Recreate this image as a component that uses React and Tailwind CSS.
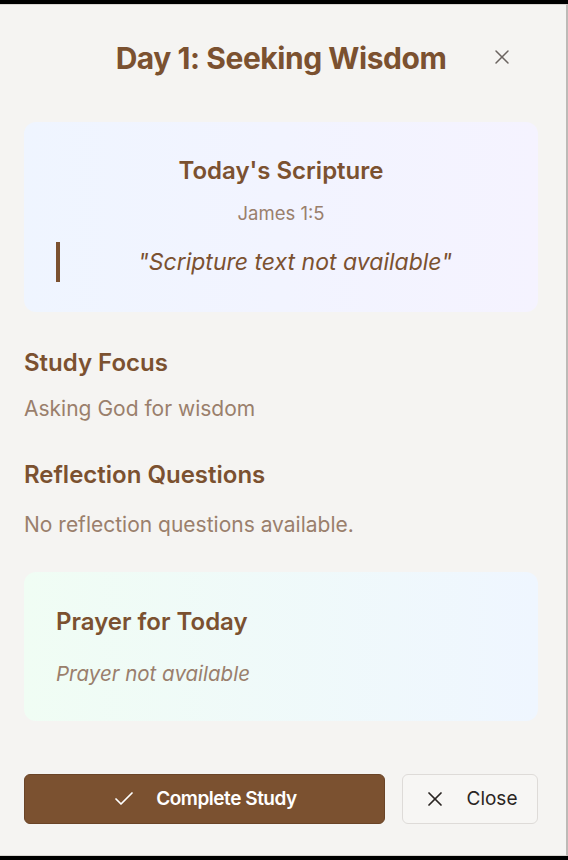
import React from 'react';
import { Check, X } from 'lucide-react';

const brown = 'text-[#7b5130]';
const muted = 'text-[#9a7f6c]';

function Section({ title, children, className = '' }) {
  return (
    <div className={className}>
      <h3 className={`text-2xl font-semibold leading-8 ${brown}`}>{title}</h3>
      {children}
    </div>
  );
}

export default function App() {
  return (
    <div className="h-[860px] bg-black pt-1 pb-1" style={{ fontFamily: 'Inter, "Noto Sans", sans-serif' }}>
      <div className="h-full bg-[#f5f4f2] border-t border-b border-[#d9d6d2] border-r-2 border-r-[#bdbab7] flex flex-col">
        {/* header */}
        <div className="relative pl-6 pr-7 pt-[35px]">
          <h2 className={`text-3xl font-bold leading-9 text-center tracking-[-0.015em] ${brown}`}>
            Day 1: Seeking Wisdom
          </h2>
          <button className="absolute right-[52px] top-[40px] text-[#6b6460]">
            <X size={24} strokeWidth={1.5} />
          </button>
        </div>

        <div className="pl-6 pr-7 pt-[46px]">
          {/* scripture card */}
          <div className="rounded-xl bg-gradient-to-r from-[#eff5ff] to-[#f5f3ff] px-8 pt-[33px] pb-[30px] text-center">
            <h3 className={`text-2xl font-semibold leading-8 ${brown}`}>Today's Scripture</h3>
            <p className={`mt-3 text-[18.5px] leading-7 ${muted}`}>James 1:5</p>
            <blockquote className={`mt-[15px] border-l-4 border-[#7b5130] pl-6 py-1 text-[23px] leading-8 italic ${brown}`}>
              "Scripture text not available"
            </blockquote>
          </div>

          <Section title="Study Focus" className="mt-[35px]">
            <p className={`mt-4 text-[21px] leading-7 ${muted}`}>Asking God for wisdom</p>
          </Section>

          <Section title="Reflection Questions" className="mt-9">
            <p className={`mt-5 text-[21px] leading-7 ${muted}`}>No reflection questions available.</p>
          </Section>

          {/* prayer card */}
          <div className="mt-[33px] rounded-xl bg-gradient-to-r from-[#f0fdf4] to-[#eff6ff] px-8 pt-[34px] pb-[33px]">
            <h3 className={`text-2xl font-semibold leading-8 ${brown}`}>Prayer for Today</h3>
            <p className={`mt-[22px] text-[20.5px] leading-7 italic ${muted}`}>Prayer not available</p>
          </div>

          {/* actions */}
          <div className="mt-[53px] flex gap-[17px]">
            <button className="flex-1 h-[50px] rounded-md bg-[#7b5130] border border-[#6a4427] text-white flex items-center justify-center gap-5 text-[19px] font-semibold tracking-tight">
              <Check size={24} strokeWidth={1.75} />
              <span>Complete Study</span>
            </button>
            <button className="w-[136px] h-[50px] rounded-md bg-[#f7f6f4] border border-[#dedbd8] text-[#2a2522] flex items-center justify-center gap-5 text-[19px] font-normal">
              <X size={24} strokeWidth={1.75} />
              <span>Close</span>
            </button>
          </div>
        </div>
      </div>
    </div>
  );
}
